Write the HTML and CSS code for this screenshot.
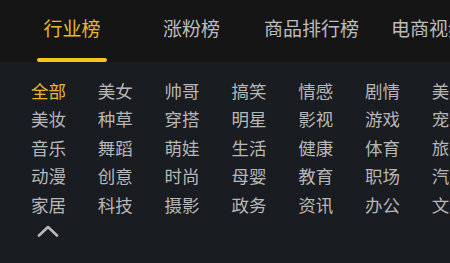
FILE: index.html
```html
<!DOCTYPE html>
<html lang="zh-CN">
<head>
<meta charset="utf-8">
<link rel="stylesheet" href="styles.css">
</head>
<body>
<div class="page">
  <nav class="tabs">
    <div class="tab tab-active"><span class="tab-label">行业榜</span><span class="tab-bar"></span></div>
    <div class="tab tab-fans"><span class="tab-label">涨粉榜</span></div>
    <div class="tab tab-goods"><span class="tab-label">商品排行榜</span></div>
    <div class="tab tab-video"><span class="tab-label">电商视频榜</span></div>
  </nav>
  <section class="cats">
    <div class="grid">
      <span class="cat cat-active">全部</span><span class="cat">美女</span><span class="cat">帅哥</span><span class="cat">搞笑</span><span class="cat">情感</span><span class="cat">剧情</span><span class="cat">美食</span>
      <span class="cat">美妆</span><span class="cat">种草</span><span class="cat">穿搭</span><span class="cat">明星</span><span class="cat">影视</span><span class="cat">游戏</span><span class="cat">宠物</span>
      <span class="cat">音乐</span><span class="cat">舞蹈</span><span class="cat">萌娃</span><span class="cat">生活</span><span class="cat">健康</span><span class="cat">体育</span><span class="cat">旅行</span>
      <span class="cat">动漫</span><span class="cat">创意</span><span class="cat">时尚</span><span class="cat">母婴</span><span class="cat">教育</span><span class="cat">职场</span><span class="cat">汽车</span>
      <span class="cat">家居</span><span class="cat">科技</span><span class="cat">摄影</span><span class="cat">政务</span><span class="cat">资讯</span><span class="cat">办公</span><span class="cat">文化</span>
    </div>
    <div class="collapse">
      <svg width="22" height="13" viewBox="0 0 22 13"><polyline points="2,11.5 11,3 20,11.5" fill="none" stroke="#b9b9b9" stroke-width="2.6" stroke-linecap="round" stroke-linejoin="round"/></svg>
    </div>
  </section>
</div>
</body>
</html>
```
FILE: styles.css
```css
html, body {
  margin: 0;
  padding: 0;
  background: #191c20;
  overflow: hidden;
}
.page {
  width: 450px;
  height: 263px;
  overflow: hidden;
  font-family: "Noto Sans CJK SC", "Noto Sans", sans-serif;
}
.tabs {
  display: flex;
  align-items: flex-start;
  height: 62px;
  background: #151515;
  white-space: nowrap;
  overflow: hidden;
}
.tab {
  display: flex;
  flex-direction: column;
  align-items: center;
  flex: none;
  padding-top: 14px;
}
.tab-label {
  font-size: 19px;
  line-height: 27px;
  color: #bcbcbc;
}
.tab-active {
  width: 70px;
  margin-left: 37px;
}
.tab-active .tab-label {
  color: #e9b72f;
}
.tab-bar {
  display: block;
  width: 70px;
  height: 4px;
  margin-top: 17px;
  border-radius: 2px;
  background: #f3c51d;
}
.tab-fans { margin-left: 56px; }
.tab-goods { margin-left: 44px; }
.tab-video { margin-left: 32px; }
.cats {
  padding: 15px 0 0 31px;
}
.grid {
  display: grid;
  grid-template-columns: repeat(7, 66.8px);
  grid-auto-rows: 28.4px;
  width: 470px;
}
.cat {
  font-size: 17.5px;
  line-height: 28.4px;
  color: #b7b7b7;
  white-space: nowrap;
}
.cat-active {
  color: #e9b72f;
}
.collapse {
  display: flex;
  padding: 5px 0 0 6px;
}
.collapse svg {
  display: block;
}
```
